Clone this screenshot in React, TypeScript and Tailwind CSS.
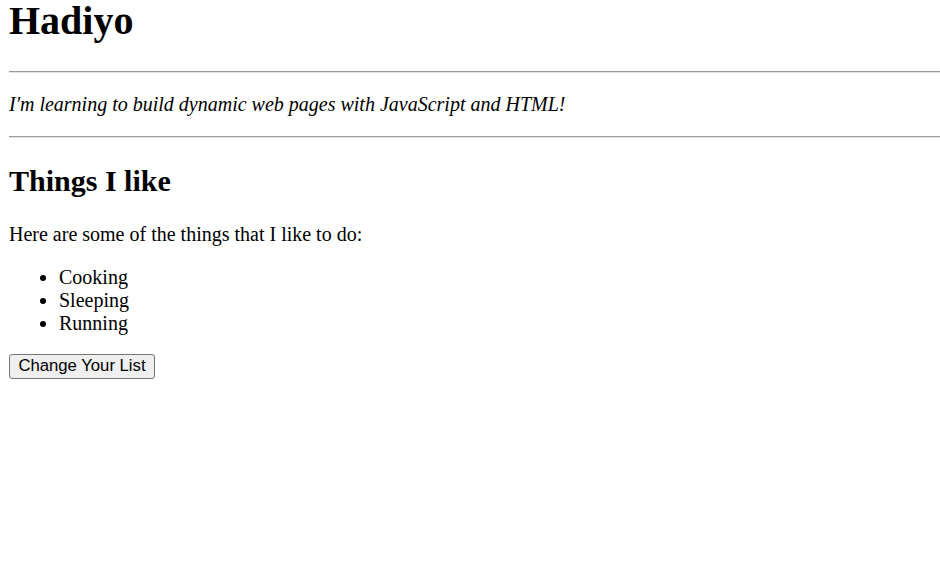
export default function App() {
  return (
    <div className="min-h-screen bg-white pl-[9px] text-black font-['Liberation_Serif',serif]">
      <h1 className="mb-[30px] text-[40px] font-bold leading-[41px]">Hadiyo</h1>
      <hr className="h-0 border-0 border-t border-b border-t-[#9a9a9a] border-b-[#e4e4e4]" />
      <p className="mt-[20px] text-[20px] italic leading-[23px]">
        I'm learning to build dynamic web pages with JavaScript and HTML!
      </p>
      <hr className="mt-[20px] h-0 border-0 border-t border-b border-t-[#9a9a9a] border-b-[#e4e4e4]" />
      <h2 className="mt-[25px] mb-[25px] text-[30px] font-bold leading-[35px]">Things I like</h2>
      <p className="text-[20px] leading-[23px]">Here are some of the things that I like to do:</p>
      <ul className="mt-[20px] list-disc pl-[50px] text-[20px] leading-[23px]">
        <li>Cooking</li>
        <li>Sleeping</li>
        <li>Running</li>
      </ul>
      <button className="mt-[19px] flex h-[25px] w-[146px] items-center justify-center rounded-[3px] border border-[#767676] bg-[#efefef] font-['Liberation_Sans',Arial,sans-serif] text-[16.7px] leading-none">
        Change Your List
      </button>
    </div>
  );
}
